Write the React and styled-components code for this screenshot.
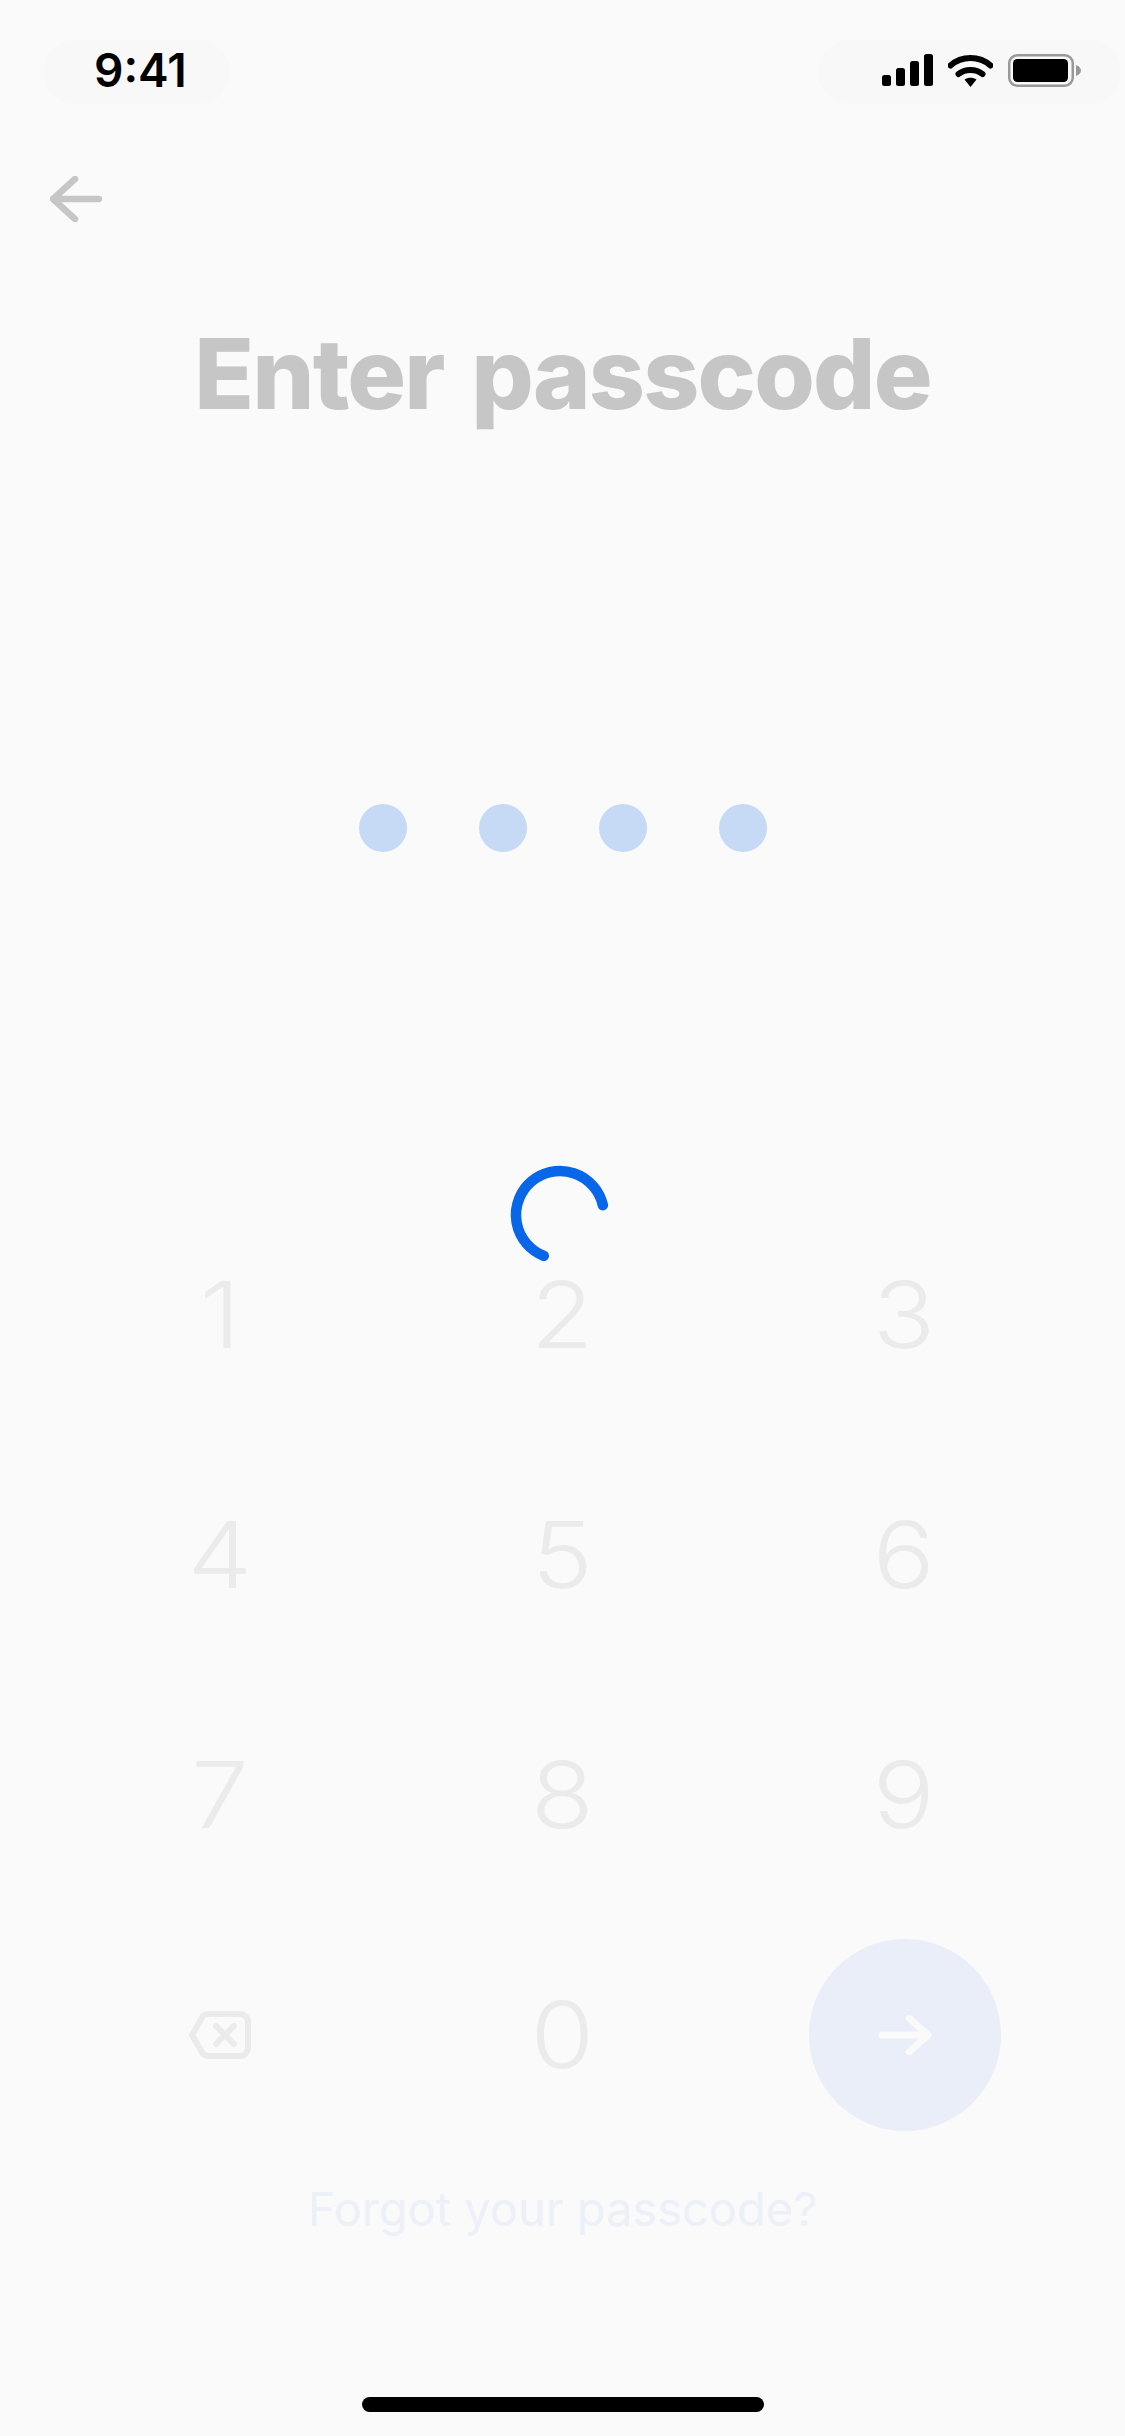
import React from 'react'
import styled, { createGlobalStyle } from 'styled-components'

const Global = createGlobalStyle`
  html, body { margin: 0; padding: 0; background: #fafafa; }
  * { box-sizing: border-box; }
`

const Page = styled.div`
  position: relative;
  width: 1125px;
  height: 2436px;
  overflow: hidden;
  background: #fafafa;
  display: flex;
  flex-direction: column;
  font-family: Inter, "Liberation Sans", sans-serif;
`

const StatusBar = styled.div`
  display: flex;
  justify-content: space-between;
  padding: 40px 3px 0 43px;
  height: 112px;
`

const Pill = styled.div`
  height: 64px;
  width: ${p => p.$w}px;
  border-radius: 32px;
  background: #f8f8f8;
  display: flex;
  align-items: center;
  padding-left: ${p => p.$pad}px;
  padding-bottom: 4px;
  gap: 15px;
`

const Time = styled.span`
  font-size: 46px;
  font-weight: 600;
  line-height: 60px;
  color: #000;
`

const BackRow = styled.div`
  margin-top: 31px;
  height: 112px;
  padding: 0 0 0 50px;
  display: flex;
  align-items: center;
`

const Title = styled.h1`
  margin: 59px 0 0;
  text-align: center;
  font-size: 98px;
  font-weight: 800;
  letter-spacing: -1.8px;
  word-spacing: 8px;
  line-height: 120px;
  color: #c6c6c6;
`

const Dots = styled.div`
  margin-top: 370px;
  display: flex;
  justify-content: center;
  gap: 72px;
  padding-left: 1px;
`

const Dot = styled.div`
  width: 48px;
  height: 48px;
  border-radius: 50%;
  background: #c7daf5;
`

const Spinner = styled.svg`
  position: absolute;
  left: 505px;
  top: 1160px;
`

const Keypad = styled.div`
  margin-top: 367px;
  padding: 0 49px;
  display: grid;
  grid-template-columns: repeat(3, 342px);
  grid-auto-rows: 192px;
  row-gap: 48px;
`

const Key = styled.div`
  display: flex;
  align-items: center;
  justify-content: center;
`

const Digit = styled.span`
  display: block;
  font-size: 92px;
  font-weight: 300;
  line-height: 1;
  color: #ebebeb;
  transform: scaleX(1.12);
`

const Go = styled.div`
  width: 192px;
  height: 192px;
  margin-left: 2px;
  border-radius: 50%;
  background: #e9eef8;
  display: flex;
  align-items: center;
  justify-content: center;
`

const Forgot = styled.div`
  margin-top: 46px;
  text-align: center;
  font-size: 47px;
  font-weight: 400;
  line-height: 64px;
  color: #ecf0f8;
`

const HomeBar = styled.div`
  position: absolute;
  left: 362px;
  bottom: 24px;
  width: 402px;
  height: 15px;
  border-radius: 8px;
  background: #000;
`

const Signal = () => (
  <svg width="51" height="32" viewBox="0 0 51 32">
    <rect x="0" y="21" width="9" height="11" rx="2.5" fill="#000" />
    <rect x="14" y="14" width="9" height="18" rx="2.5" fill="#000" />
    <rect x="28" y="7" width="9" height="25" rx="2.5" fill="#000" />
    <rect x="42" y="0" width="9" height="32" rx="2.5" fill="#000" />
  </svg>
)

const Wifi = () => (
  <svg width="45" height="33" viewBox="0 0 45 33">
    <path d="M2.5 11.5C13.5 1.5 31.5 1.5 42.5 11.5" fill="none" stroke="#000" strokeWidth="6" strokeLinecap="round" />
    <path d="M10.5 20C17 14.5 28 14.5 34.5 20" fill="none" stroke="#000" strokeWidth="6" strokeLinecap="round" />
    <path d="M16.5 25.5C20 23 25 23 28.5 25.5L22.5 33Z" fill="#000" />
  </svg>
)

const Battery = () => (
  <svg width="73" height="33" viewBox="0 0 73 33">
    <rect x="1.25" y="1.25" width="63.5" height="30.5" rx="8" fill="none" stroke="#999" strokeWidth="2.5" />
    <rect x="5" y="5" width="55" height="23" rx="4.5" fill="#000" />
    <path d="M68 11C71 12 73 14 73 16.5C73 19 71 21 68 22Z" fill="#999" />
  </svg>
)

const BackArrow = () => (
  <svg width="52" height="46" viewBox="0 0 52 46" style={{ display: 'block' }}>
    <path d="M25 3L3 23L25 43M3 23H49" fill="none" stroke="#c6c6c6" strokeWidth="6.5" strokeLinecap="round" strokeLinejoin="round" />
  </svg>
)

const Backspace = () => (
  <svg width="62" height="48" viewBox="0 0 62 48">
    <path d="M19 3H51C55.500 3 59 6.500 59 11V37C59 41.500 55.500 45 51 45H19C17 45 15.500 44.300 14 43L3 24L14 5C15.500 3.700 17 3 19 3Z" fill="none" stroke="#ebebeb" strokeWidth="6" strokeLinejoin="round" />
    <path d="M27 15L45 33M45 15L27 33" fill="none" stroke="#ebebeb" strokeWidth="6" strokeLinecap="round" />
  </svg>
)

const NextArrow = () => (
  <svg width="54" height="40" viewBox="0 0 54 40">
    <path d="M31 3L50 20L31 37M4 20H49" fill="none" stroke="#fafafa" strokeWidth="7" strokeLinecap="round" strokeLinejoin="round" />
  </svg>
)

export default function App() {
  return (
    <Page>
      <Global />
      <StatusBar>
        <Pill $w={187} $pad={51}><Time>9:41</Time></Pill>
        <Pill $w={304} $pad={64}>
          <Signal />
          <Wifi />
          <Battery />
        </Pill>
      </StatusBar>
      <BackRow><BackArrow /></BackRow>
      <Title>Enter passcode</Title>
      <Dots>
        {[0, 1, 2, 3].map(i => <Dot key={i} />)}
      </Dots>
      <Keypad>
        {['1', '2', '3', '4', '5', '6', '7', '8', '9'].map(n => <Key key={n}><Digit>{n}</Digit></Key>)}
        <Key><Backspace /></Key>
        <Key><Digit>0</Digit></Key>
        <Key><Go><NextArrow /></Go></Key>
      </Keypad>
      <Forgot>Forgot your passcode?</Forgot>
      <Spinner width="110" height="110" viewBox="0 0 110 110">
        <path d="M97.900 45.250A44 44 0 1 0 38.800 95.900" fill="none" stroke="#0866e8" strokeWidth="10.500" strokeLinecap="round" />
      </Spinner>
      <HomeBar />
    </Page>
  )
}
